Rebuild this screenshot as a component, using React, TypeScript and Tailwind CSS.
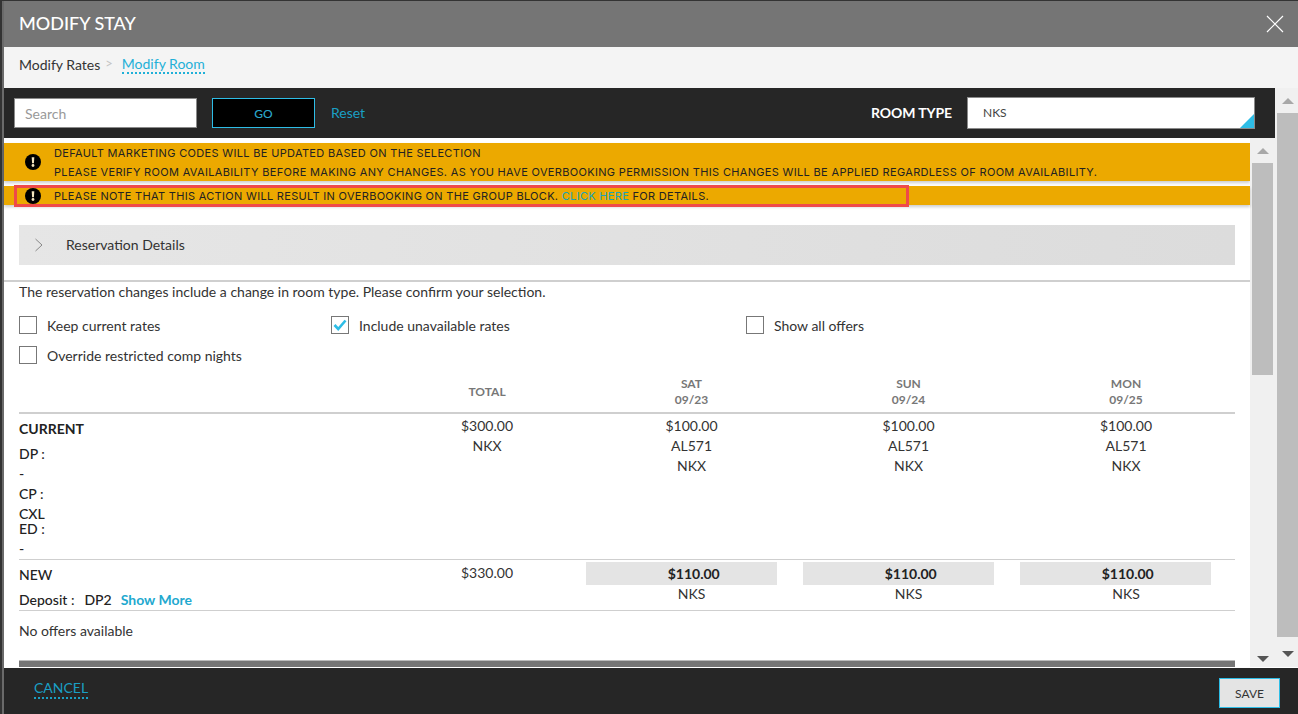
const Alert = () => (
  <svg width="16" height="16" viewBox="0 0 16 16" className="shrink-0">
    <circle cx="8" cy="8" r="8" fill="#000" />
    <path d="M6.7 3.2h2.6l-.4 6H7.1z" fill="#f5e6c0" />
    <circle cx="8" cy="11.5" r="1.4" fill="#f5e6c0" />
  </svg>
);

const Box = ({ checked }: { checked?: boolean }) => (
  <span className="w-[18px] h-[18px] border border-[#777] bg-white shrink-0 flex items-center justify-center">
    {checked && (
      <svg width="14" height="12" viewBox="0 0 14 12">
        <path d="M1.5 6 L5.2 10 L12.5 1.5" fill="none" stroke="#2ebde6" strokeWidth="2.6" />
      </svg>
    )}
  </span>
);

const Up = () => <span className="w-0 h-0 border-x-[6px] border-x-transparent border-b-[6px] border-b-[#a8a8a8]" />;
const Down = () => <span className="w-0 h-0 border-x-[6px] border-x-transparent border-t-[6px] border-t-[#555]" />;

const days = [
  ["SAT", "09/23"],
  ["SUN", "09/24"],
  ["MON", "09/25"],
];

export default function App() {
  return (
    <div className="w-[1298px] h-[714px] overflow-hidden bg-[#333333] pl-[2px] pt-px text-[14px] text-[#333] font-['Lato',sans-serif]">
      <div className="h-full flex flex-col bg-white border-l-2 border-[#6a6a6a]">
        <header className="h-[46px] shrink-0 bg-[#757575] flex items-center justify-between pl-[15px] pr-[14px]">
          <h1 className="text-[18px] font-medium text-white pb-[2px]">MODIFY STAY</h1>
          <svg width="18" height="18" viewBox="0 0 18 18">
            <path d="M1 1 L17 17 M17 1 L1 17" stroke="#fff" strokeWidth="1.2" />
          </svg>
        </header>
        <nav className="h-[41px] shrink-0 bg-[#f4f4f4] flex items-center pl-[15px] pb-[7px]">
          <span>Modify Rates</span>
          <span className="text-[#c4c4c4] ml-[5px] text-[13px]">&gt;</span>
          <a className="ml-[9px] text-[#1fb0d8] border-b-2 border-dotted border-[#1fb0d8] leading-[17px]">Modify Room</a>
        </nav>
        <div className="flex-1 min-h-0 flex pb-px">
          <div className="w-[1271px] flex flex-col min-w-0">
            <div className="h-[50px] shrink-0 bg-[#262626] flex items-center pl-[10px] pr-[20px]">
              <div className="w-[183px] h-[30px] bg-white border border-[#8a8a8a] flex items-center pl-[10px] text-[#999]">Search</div>
              <button className="ml-[15px] w-[103px] h-[30px] bg-black border border-[#2ebde6] text-[#2ba8cc] text-[12px] font-medium pt-[2px]">GO</button>
              <a className="ml-4 text-[#1a9fc4] pb-[2px]">Reset</a>
              <span className="ml-auto text-white font-bold pb-[2px] tracking-[-0.1px]">ROOM TYPE</span>
              <div className="relative ml-[15px] w-[288px] h-[32px] bg-white border border-[#8a8a8a] flex items-center pl-[15px] text-[12px] text-[#444]">
                NKS
                <span className="absolute right-0 bottom-0 w-0 h-0 border-l-[14px] border-l-transparent border-b-[14px] border-b-[#2ebde6]" />
              </div>
            </div>
            <div className="flex-1 min-h-0 flex">
              <main className="w-[1246px] flex flex-col pt-[5px]">
                <div className="h-[38px] bg-[#eca900] shadow-[0_2px_3px_rgba(0,0,0,0.2)] flex items-center pl-[21px] text-[11px] leading-[19px] tracking-[0.33px] text-[#222] font-['Inter',sans-serif]">
                  <Alert />
                  <div className="ml-[13px] pt-[2px]">
                    <p>DEFAULT MARKETING CODES WILL BE UPDATED BASED ON THE SELECTION</p>
                    <p>PLEASE VERIFY ROOM AVAILABILITY BEFORE MAKING ANY CHANGES. AS YOU HAVE OVERBOOKING PERMISSION THIS CHANGES WILL BE APPLIED REGARDLESS OF ROOM AVAILABILITY.</p>
                  </div>
                </div>
                <div className="relative mt-[5px] h-[19px] bg-[#eca900] shadow-[0_2px_3px_rgba(0,0,0,0.2)] flex items-center pl-[21px] text-[11px] tracking-[0.31px] text-[#222] font-['Inter',sans-serif]">
                  <Alert />
                  <p className="ml-[13px] pt-[2px]">
                    PLEASE NOTE THAT THIS ACTION WILL RESULT IN OVERBOOKING ON THE GROUP BLOCK. <span className="text-[#1ba3b8]">CLICK HERE</span> FOR DETAILS.
                  </p>
                  <span className="absolute left-[10px] top-[-1px] w-[895px] h-[22px] border-[3px] border-[#ef4a4a]" />
                </div>
                <div className="mt-[20px] ml-[15px] w-[1216px] h-[40px] shrink-0 bg-gradient-to-r from-[#e6e6e6] to-[#dcdcdc] flex items-center">
                  <svg width="10" height="14" viewBox="0 0 10 14" className="ml-[15px]">
                    <path d="M1.5 1 L8 7 L1.5 13" fill="none" stroke="#888" strokeWidth="1" />
                  </svg>
                  <span className="ml-[22px] pb-[2px]">Reservation Details</span>
                </div>
                <div className="mt-[15px] border-t-2 border-[#cfcfcf] px-[15px] leading-[20px]">The reservation changes include a change in room type. Please confirm your selection.</div>
                <div className="mt-[14px] ml-[15px] grid grid-cols-[312px_415px_1fr] gap-y-[10px] leading-[20px]">
                  <label className="flex gap-[10px]"><Box />Keep current rates</label>
                  <label className="flex gap-[10px]"><Box checked />Include unavailable rates</label>
                  <label className="flex gap-[10px]"><Box />Show all offers</label>
                  <label className="flex gap-[10px]"><Box />Override restricted comp nights</label>
                </div>
                <section className="ml-[15px] mt-[10px] w-[1216px] grid grid-cols-[372px_192px_217px_217px_218px] text-center leading-[20px]">
                  <div className="border-b-2 border-[#cfcfcf] h-[38px]" />
                  <div className="border-b-2 border-[#cfcfcf] h-[38px] pt-[6px] text-[12px] font-bold text-[#777]">TOTAL</div>
                  {days.map(([d, n]) => (
                    <div key={d} className="border-b-2 border-[#cfcfcf] h-[38px] text-[12px] font-bold text-[#777] leading-[16px]">
                      {d}<br />{n}
                    </div>
                  ))}

                  <div className="border-b border-[#cfcfcf] h-[146px] text-left font-medium text-[#222] pt-[5px]">
                    <div className="font-bold text-[14px] leading-[20px]">CURRENT</div>
                    <div className="w-[30px] mt-[5px] leading-[20px]">DP :</div>
                    <div className="leading-[20px]">-</div>
                    <div className="leading-[20px]">CP :</div>
                    <div className="w-[30px] leading-[15px] mt-[2px]">CXL ED :</div>
                    <div className="leading-[20px] mt-[3px]">-</div>
                  </div>
                  <div className="border-b border-[#cfcfcf] pt-[2px]">$300.00<br />NKX</div>
                  {days.map(([d]) => (
                    <div key={d} className="border-b border-[#cfcfcf] pt-[2px]">$100.00<br />AL571<br />NKX</div>
                  ))}

                  <div className="border-b border-[#cfcfcf] h-[51px] text-left text-[#222] pt-[5px]">
                    <div className="font-medium">NEW</div>
                    <div className="mt-[5px] font-medium">Deposit :<span className="ml-[10px]">DP2</span><a className="ml-[9px] font-bold text-[#1fa9cf]">Show More</a></div>
                  </div>
                  <div className="border-b border-[#cfcfcf] pt-[3px]">$330.00</div>
                  {days.map(([d]) => (
                    <div key={d} className="border-b border-[#cfcfcf] pt-[2px]">
                      <div className="ml-[3px] w-[191.4px] h-[23px] bg-[#e4e4e4] pl-[24px] font-bold leading-[23px] text-[#222]">$110.00</div>
                      <div className="leading-[17px]">NKS</div>
                    </div>
                  ))}
                </section>
                <p className="ml-[15px] mt-[10px] leading-[20px]">No offers available</p>
                <div className="mt-auto ml-[15px] w-[1216px] h-[7px] bg-[#757575] border-t border-[#bbb]" />
              </main>
              <div className="w-[25px] bg-[#f0f0f0] flex flex-col items-center">
                <div className="h-[25px] shrink-0 flex items-center justify-center"><Up /></div>
                <div className="w-[21px] h-[212px] bg-[#bdbdbd]" />
                <div className="mt-auto h-[16px] flex items-center"><Down /></div>
              </div>
            </div>
          </div>
          <div className="w-[23px] bg-[#f0f0f0] flex flex-col items-center pl-[2px]">
            <div className="h-[25px] shrink-0 flex items-center justify-center"><Up /></div>
            <div className="w-[21px] h-[524px] bg-[#bdbdbd]" />
            <div className="mt-auto h-[26px] flex items-center"><Down /></div>
          </div>
        </div>
        <footer className="h-[46px] shrink-0 bg-[#262626] flex items-center justify-between pl-[30px] pr-[18px]">
          <a className="text-[#1a9fc4] border-b-2 border-dotted border-[#1a9fc4] leading-[19px] mb-[5px]">CANCEL</a>
          <button className="w-[61px] h-[30px] mt-[4px] pt-[2px] bg-[#e4e4e4] border border-[#2ebde6] text-[12px] text-[#333]">SAVE</button>
        </footer>
      </div>
    </div>
  );
}
